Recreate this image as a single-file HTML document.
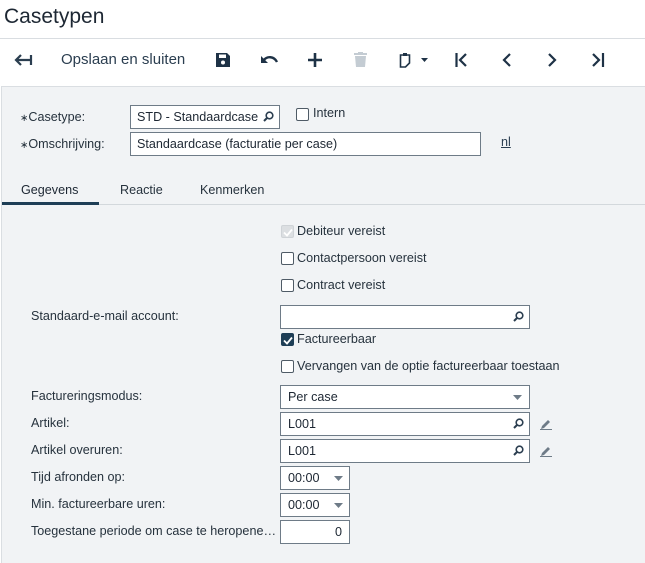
<!DOCTYPE html>
<html><head><style>
*{box-sizing:border-box;margin:0;padding:0}
body{width:645px;height:563px;overflow:hidden;background:#fff;font-family:"Liberation Sans",sans-serif;color:#26323d;font-size:12.6px;position:relative}
.a{position:absolute;white-space:nowrap}
.title{left:4px;top:5px;font-size:21px;color:#1d2733}
.hr{left:0;top:38px;width:645px;height:1px;background:#d9dde1}
.panel{left:1px;top:86px;width:644px;height:477px;background:#f1f3f5;border-top:1px solid #dadee2;border-left:1px solid #dadee2}
.inp{position:absolute;background:#fff;border:1px solid #6e7b87;height:24px;padding:4px 7px;font-size:12.6px;color:#1d2733;white-space:nowrap}
.cb{position:absolute;width:13px;height:13px;border:1px solid #4f5b66;border-radius:2px;background:#fff}
.lbl{position:absolute;white-space:nowrap;font-size:12.6px;color:#26323d}
.ic{position:absolute}
</style></head><body>
<div class="a title">Casetypen</div>
<div class="a hr"></div>
<svg class="ic" style="left:14px;top:52px" width="20" height="16" viewBox="0 0 20 16"><path d="M2 8h14M7 3L2 8l5 5M17 3v10" stroke="#2b3e50" stroke-width="2.2" fill="none"/></svg>
<div class="a" style="left:61px;top:51px;font-size:15px;color:#2b3e50">Opslaan en sluiten</div>
<svg class="ic" style="left:216px;top:53px" width="14" height="14" viewBox="0 0 14 14"><path d="M0 0h11l3 3v11H0z" fill="#1e3246"/><rect x="3" y="1.5" width="7" height="3.5" fill="#fff"/><circle cx="7" cy="9.5" r="2" fill="#fff"/></svg>
<svg class="ic" style="left:261px;top:54px" width="18" height="12" viewBox="0 0 18 12"><path d="M3 6c3-4 10-4 13 2" stroke="#1e3246" stroke-width="2.4" fill="none"/><path d="M0 2v7h7z" fill="#1e3246"/></svg>
<svg class="ic" style="left:308px;top:53px" width="14" height="14"><path d="M7 0v14M0 7h14" stroke="#1e3246" stroke-width="2.6"/></svg>
<svg class="ic" style="left:354px;top:52px" width="13" height="15" viewBox="0 0 13 15"><rect x="0" y="1" width="13" height="2" fill="#c4ccd3"/><rect x="4" y="0" width="5" height="2" fill="#c4ccd3"/><path d="M1 4h11l-1 11H2z" fill="#c4ccd3"/></svg>
<svg class="ic" style="left:399px;top:52px" width="30" height="16" viewBox="0 0 30 16"><path d="M1.5 3h9v8l-4 4h-5z" stroke="#1e3246" stroke-width="1.6" fill="none"/><rect x="4" y="1" width="4" height="3" fill="#1e3246"/><path d="M22 6h7l-3.5 4z" fill="#1e3246"/></svg>
<svg class="ic" style="left:455px;top:52px" width="14" height="16"><path d="M1.5 1v14M11 2L5 8l6 6" stroke="#1e3246" stroke-width="2.2" fill="none"/></svg>
<svg class="ic" style="left:501px;top:52px" width="12" height="16"><path d="M9 2L3 8l6 6" stroke="#1e3246" stroke-width="2.2" fill="none"/></svg>
<svg class="ic" style="left:546px;top:52px" width="12" height="16"><path d="M3 2l6 6-6 6" stroke="#1e3246" stroke-width="2.2" fill="none"/></svg>
<svg class="ic" style="left:591px;top:52px" width="14" height="16"><path d="M2 2l6 6-6 6M12 1v14" stroke="#1e3246" stroke-width="2.2" fill="none"/></svg>

<div class="a panel"></div>
<div class="lbl" style="left:20px;top:110px"><span style="font-size:10px">∗</span>Casetype:</div>
<div class="lbl" style="left:20px;top:137px"><span style="font-size:10px">∗</span>Omschrijving:</div>
<div class="inp" style="left:130px;top:105px;width:150px;padding-left:6px">STD - Standaardcase</div>
<svg class="ic" style="left:263px;top:111px" width="11" height="11"><circle cx="6.5" cy="4.5" r="3.3" stroke="#2b3e50" stroke-width="1.6" fill="none"/><path d="M4 7L1 10" stroke="#2b3e50" stroke-width="2"/></svg>
<div class="cb" style="left:296px;top:108px"></div>
<div class="lbl" style="left:313px;top:106px">Intern</div>
<div class="inp" style="left:130px;top:132px;width:351px;padding-left:6px">Standaardcase (facturatie per case)</div>
<div class="lbl" style="left:501px;top:135px;text-decoration:underline;color:#2b3e50">nl</div>

<div class="lbl" style="left:21px;top:183px;color:#1d2733">Gegevens</div>
<div class="lbl" style="left:120px;top:183px">Reactie</div>
<div class="lbl" style="left:200px;top:183px">Kenmerken</div>
<div class="a" style="left:2px;top:204px;width:643px;height:1px;background:#d3d8dc"></div>
<div class="a" style="left:2px;top:202px;width:97px;height:3px;background:#1e3e56"></div>

<div class="cb" style="left:281px;top:225px;background:#dcdfe2;border-color:#cfd3d7"></div>
<svg class="ic" style="left:283px;top:228px" width="10" height="9"><path d="M1 4.5l3 3 5-6" stroke="#fff" stroke-width="1.8" fill="none"/></svg>
<div class="lbl" style="left:297px;top:224px">Debiteur vereist</div>
<div class="cb" style="left:281px;top:252px"></div>
<div class="lbl" style="left:297px;top:251px">Contactpersoon vereist</div>
<div class="cb" style="left:281px;top:279px"></div>
<div class="lbl" style="left:297px;top:278px">Contract vereist</div>
<div class="lbl" style="left:31px;top:309px">Standaard-e-mail account:</div>
<div class="inp" style="left:280px;top:305px;width:250px"></div>
<svg class="ic" style="left:513px;top:311px" width="11" height="11"><circle cx="6.5" cy="4.5" r="3.3" stroke="#2b3e50" stroke-width="1.6" fill="none"/><path d="M4 7L1 10" stroke="#2b3e50" stroke-width="2"/></svg>
<div class="cb" style="left:281px;top:333px;background:#1e3e56;border-color:#1e3e56"></div>
<svg class="ic" style="left:283px;top:336px" width="10" height="9"><path d="M1 4.5l3 3 5-6" stroke="#fff" stroke-width="1.8" fill="none"/></svg>
<div class="lbl" style="left:297px;top:332px">Factureerbaar</div>
<div class="cb" style="left:281px;top:360px"></div>
<div class="lbl" style="left:297px;top:359px">Vervangen van de optie factureerbaar toestaan</div>

<div class="lbl" style="left:31px;top:389px">Factureringsmodus:</div>
<div class="inp" style="left:280px;top:385px;width:250px">Per case</div>
<svg class="ic" style="left:513px;top:395px" width="9" height="5"><path d="M0 0h9L4.5 5z" fill="#6e7b87"/></svg>
<div class="lbl" style="left:31px;top:416px">Artikel:</div>
<div class="inp" style="left:280px;top:412px;width:250px">L001</div>
<svg class="ic" style="left:513px;top:418px" width="11" height="11"><circle cx="6.5" cy="4.5" r="3.3" stroke="#2b3e50" stroke-width="1.6" fill="none"/><path d="M4 7L1 10" stroke="#2b3e50" stroke-width="2"/></svg>
<svg class="ic" style="left:540px;top:418px" width="12" height="12"><path d="M1 11l1-3 6-6 2 2-6 6z" fill="#6e7b87"/><path d="M0 11.5h12" stroke="#6e7b87"/></svg>
<div class="lbl" style="left:31px;top:443px">Artikel overuren:</div>
<div class="inp" style="left:280px;top:439px;width:250px">L001</div>
<svg class="ic" style="left:513px;top:445px" width="11" height="11"><circle cx="6.5" cy="4.5" r="3.3" stroke="#2b3e50" stroke-width="1.6" fill="none"/><path d="M4 7L1 10" stroke="#2b3e50" stroke-width="2"/></svg>
<svg class="ic" style="left:540px;top:445px" width="12" height="12"><path d="M1 11l1-3 6-6 2 2-6 6z" fill="#6e7b87"/><path d="M0 11.5h12" stroke="#6e7b87"/></svg>
<div class="lbl" style="left:31px;top:470px">Tijd afronden op:</div>
<div class="inp" style="left:280px;top:466px;width:70px">00:00</div>
<svg class="ic" style="left:334px;top:476px" width="9" height="5"><path d="M0 0h9L4.5 5z" fill="#6e7b87"/></svg>
<div class="lbl" style="left:31px;top:497px">Min. factureerbare uren:</div>
<div class="inp" style="left:280px;top:493px;width:70px">00:00</div>
<svg class="ic" style="left:334px;top:503px" width="9" height="5"><path d="M0 0h9L4.5 5z" fill="#6e7b87"/></svg>
<div class="lbl" style="left:31px;top:524px;width:249px;overflow:hidden;text-overflow:ellipsis">Toegestane periode om case te heropenen na sluiten</div>
<div class="inp" style="left:280px;top:520px;width:70px;text-align:right">0</div>
</body></html>
